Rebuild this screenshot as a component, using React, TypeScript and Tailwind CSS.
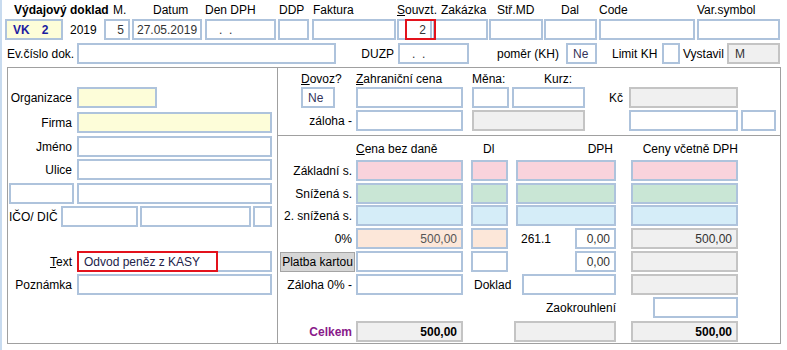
import React from "react";

type Kind = "w" | "y" | "g" | "p" | "gr" | "b" | "o";
const KIND: Record<Kind, string> = {
  w: "border-[#aec3dc] bg-white",
  y: "border-[#aec3dc] bg-[#fdfdd9]",
  g: "border-[#c4c4c4] bg-[#f0f0f0]",
  p: "border-[#aec3dc] bg-[#f9d3dc]",
  gr: "border-[#aec3dc] bg-[#c9e6d5]",
  b: "border-[#aec3dc] bg-[#d5edf8]",
  o: "border-[#aec3dc] bg-[#fce7d9]",
};

function F({
  k = "w",
  className = "",
  right = false,
  children,
}: {
  k?: Kind;
  className?: string;
  right?: boolean;
  children?: React.ReactNode;
}) {
  return (
    <div
      className={`h-[21px] shrink-0 border-2 flex items-center whitespace-nowrap overflow-hidden text-[#333] ${
        right ? "justify-end pr-[4px]" : "pl-[3px]"
      } ${KIND[k]} ${className}`}
    >
      {children}
    </div>
  );
}

function Lbl({ className = "", children }: { className?: string; children?: React.ReactNode }) {
  return <div className={`shrink-0 whitespace-nowrap ${className}`}>{children}</div>;
}

function PriceRow({
  label,
  k,
  className = "",
}: {
  label: string;
  k: Kind;
  className?: string;
}) {
  return (
    <div className={`flex items-center h-[21px] ${className}`}>
      <Lbl className="w-[76px] text-right pr-[2px]">{label}</Lbl>
      <F k={k} className="ml-[2px] w-[107px]" />
      <F k={k} className="ml-[8px] w-[37px]" />
      <F k={k} className="ml-[8px] w-[100px]" />
      <F k={k} className="ml-[15px] w-[107px]" />
    </div>
  );
}

export default function App() {
  return (
    <div className="w-[787px] h-[350px] bg-white overflow-hidden border-l-2 border-[#c8dbef] font-['Liberation_Sans',Arial,sans-serif] text-[12px] text-black leading-[14px]">
      {/* header labels */}
      <div className="flex h-[19px] pt-[3px]">
        <Lbl className="ml-[12px] w-[99px] font-bold">Výdajový doklad</Lbl>
        <Lbl className="w-[40px]">M.</Lbl>
        <Lbl className="w-[52px]">Datum</Lbl>
        <Lbl className="w-[74px]">Den DPH</Lbl>
        <Lbl className="w-[34px]">DDP</Lbl>
        <Lbl className="w-[84px]">Faktura</Lbl>
        <Lbl className="w-[44px]">
          <span className="underline">S</span>ouvzt.
        </Lbl>
        <Lbl className="w-[56px]">Zakázka</Lbl>
        <Lbl className="w-[64px]">Stř.MD</Lbl>
        <Lbl className="w-[38px]">Dal</Lbl>
        <Lbl className="w-[98px]">Code</Lbl>
        <Lbl>Var.symbol</Lbl>
      </div>

      {/* row 1 */}
      <div className="flex items-center h-[21px]">
        <F k="y" className="ml-[3px] w-[58px] font-bold text-[#1c1ca0]">
          <span className="pl-[3px] text-[#1c1ca0]">VK</span>
          <span className="ml-[12px] text-[#1c1ca0]">2</span>
        </F>
        <Lbl className="w-[41px] pl-[7px]">2019</Lbl>
        <F className="w-[26px]" right>
          5
        </F>
        <F className="ml-[2px] w-[70px]">27.05.2019</F>
        <F className="ml-[3px] w-[71px]">
          <span className="pl-[9px] whitespace-pre">.  .</span>
        </F>
        <F className="ml-[2px] w-[31px]" />
        <F className="ml-[3px] w-[84px]" />
        <div className="relative ml-[1px] w-[35px] h-[21px] shrink-0 z-10">
          <F className="w-[35px]" right>
            2
          </F>
          <div className="absolute left-[8px] top-0 w-[31px] h-[21px] border-2 border-[#e3121c]" />
        </div>
        <F className="ml-[1px] w-[55px]" />
        <F className="ml-[1px] w-[54px]" />
        <F className="ml-[1px] w-[53px]" />
        <F className="ml-[2px] w-[96px]" />
        <F className="ml-[2px] w-[83px]" />
      </div>

      {/* row 2 */}
      <div className="flex items-center h-[21px] mt-[3px]">
        <Lbl className="w-[75px] pl-[5px]">Ev.číslo dok.</Lbl>
        <F className="w-[259px]" />
        <Lbl className="w-[62px] text-right pr-[4px]">DUZP</Lbl>
        <F className="w-[71px]">
          <span className="pl-[9px] whitespace-pre">.  .</span>
        </F>
        <Lbl className="w-[97px] pl-[28px]">poměr (KH)</Lbl>
        <F className="w-[31px] text-[#33335a]">
          <span className="pl-[2px]">Ne</span>
        </F>
        <Lbl className="w-[65px] pl-[15px]">Limit KH</Lbl>
        <F className="w-[18px]" />
        <Lbl className="w-[47px] pl-[3px]">Vystavil</Lbl>
        <F k="g" className="w-[53px]">
          <span className="pl-[3px]">M</span>
        </F>
      </div>

      {/* main panel */}
      <div className="ml-[5px] mt-[3px] w-[774px] h-[277px] border border-[#a0a0a0] flex">
        {/* left column */}
        <div className="w-[270px] shrink-0 border-r border-[#a0a0a0] pt-[19px]">
          <div className="flex items-center h-[21px]">
            <Lbl className="w-[66px] text-right pr-[2px]">Organizace</Lbl>
            <F k="y" className="ml-[3px] w-[80px]" />
          </div>
          <div className="flex items-center h-[21px] mt-[4px]">
            <Lbl className="w-[66px] text-right pr-[2px]">Firma</Lbl>
            <F k="y" className="ml-[3px] w-[195px]" />
          </div>
          <div className="flex items-center h-[21px] mt-[3px]">
            <Lbl className="w-[66px] text-right pr-[2px]">Jméno</Lbl>
            <F className="ml-[3px] w-[195px]" />
          </div>
          <div className="flex items-center h-[21px] mt-[2px]">
            <Lbl className="w-[66px] text-right pr-[2px]">Ulice</Lbl>
            <F className="ml-[3px] w-[195px]" />
          </div>
          <div className="flex items-center h-[21px] mt-[3px]">
            <F className="ml-[1px] w-[65px]" />
            <F className="ml-[3px] w-[195px]" />
          </div>
          <div className="flex items-center h-[21px] mt-[2px]">
            <Lbl className="w-[52px] pl-[1px]">IČO/ DIČ</Lbl>
            <F className="ml-[1px] w-[77px]" />
            <F className="ml-[2px] w-[111px]" />
            <F className="ml-[2px] w-[19px]" />
          </div>
          <div className="flex items-center h-[21px] mt-[24px]">
            <Lbl className="w-[66px] text-right pr-[2px]">
              <span className="underline">T</span>ext
            </Lbl>
            <div className="relative ml-[3px] w-[195px] h-[21px] shrink-0">
              <F className="w-[195px] text-[#22224a]">
                <span className="pl-[2px] text-[#22224a]">Odvod peněz z KASY</span>
              </F>
              <div className="absolute left-0 top-0 w-[141px] h-[21px] border-2 border-[#e3121c]" />
            </div>
          </div>
          <div className="flex items-center h-[21px] mt-[2px]">
            <Lbl className="w-[66px] text-right pr-[2px]">Poznámka</Lbl>
            <F className="ml-[3px] w-[195px]" />
          </div>
        </div>

        {/* right column */}
        <div className="flex-1 flex flex-col">
          {/* import section */}
          <div className="h-[68px] shrink-0 border-b border-[#a0a0a0] pt-[4px]">
            <div className="flex h-[14px]">
              <Lbl className="w-[78px] pl-[23px]">
                <span className="underline">D</span>ovoz?
              </Lbl>
              <Lbl className="w-[116px]">
                <span className="underline">Z</span>ahraniční cena
              </Lbl>
              <Lbl className="w-[72px]">Měna:</Lbl>
              <Lbl>Kurz:</Lbl>
            </div>
            <div className="flex items-center h-[21px] mt-[1px]">
              <F className="ml-[23px] w-[34px] text-[#33335a]">
                <span className="pl-[2px]">Ne</span>
              </F>
              <F className="ml-[21px] w-[107px]" />
              <F className="ml-[9px] w-[37px]" />
              <F className="ml-[3px] w-[73px]" />
              <Lbl className="w-[44px] text-right pr-[6px]">Kč</Lbl>
              <F k="g" className="w-[109px]" />
            </div>
            <div className="flex items-center h-[21px] mt-[2px]">
              <Lbl className="w-[76px] text-right pr-[2px]">záloha -</Lbl>
              <F className="ml-[2px] w-[107px]" />
              <F k="g" className="ml-[9px] w-[113px]" />
              <F className="ml-[44px] w-[109px]" />
              <F className="ml-[3px] w-[35px]" />
            </div>
          </div>

          {/* price section */}
          <div className="flex-1 pt-[6px]">
            <div className="flex h-[14px]">
              <Lbl className="ml-[78px] w-[107px]">
                <span className="underline">C</span>ena bez daně
              </Lbl>
              <Lbl className="ml-[8px] w-[37px] pl-[12px]">Dl</Lbl>
              <Lbl className="ml-[8px] w-[100px] text-right pr-[3px]">DPH</Lbl>
              <Lbl className="ml-[15px] w-[107px] text-right">Ceny včetně DPH</Lbl>
            </div>

            <PriceRow label="Základní s." k="p" className="mt-[4px]" />
            <PriceRow label="Snížená s." k="gr" className="mt-[2px]" />
            <PriceRow label="2. snížená s." k="b" className="mt-[1px]" />

            {/* 0% */}
            <div className="flex items-center h-[21px] mt-[2px]">
              <Lbl className="w-[76px] text-right pr-[2px]">0%</Lbl>
              <F k="o" className="ml-[2px] w-[107px] text-[#555]" right>
                500,00
              </F>
              <F k="o" className="ml-[8px] w-[37px]" />
              <div className="ml-[8px] w-[100px] shrink-0 flex items-center">
                <Lbl className="w-[59px] pl-[5px]">261.1</Lbl>
                <F className="w-[41px]" right>
                  0,00
                </F>
              </div>
              <F k="g" className="ml-[15px] w-[107px]" right>
                500,00
              </F>
            </div>

            {/* platba kartou */}
            <div className="flex items-center h-[21px] mt-[2px]">
              <div className="ml-[2px] w-[75px] h-[20px] shrink-0 bg-[#d6d6d6] border border-[#a4a4a4] flex items-center justify-center whitespace-nowrap overflow-hidden">
                Platba kartou
              </div>
              <F className="ml-[1px] w-[107px]" />
              <F className="ml-[8px] w-[37px]" />
              <div className="ml-[8px] w-[100px] shrink-0 flex items-center">
                <F className="ml-[59px] w-[41px]" right>
                  0,00
                </F>
              </div>
              <F k="g" className="ml-[15px] w-[107px]" />
            </div>

            {/* záloha 0% */}
            <div className="flex items-center h-[21px] mt-[2px]">
              <Lbl className="w-[76px] text-right pr-[2px]">Záloha 0% -</Lbl>
              <F className="ml-[2px] w-[107px]" />
              <Lbl className="w-[59px] pl-[11px]">Doklad</Lbl>
              <F className="w-[94px]" />
              <F k="g" className="ml-[15px] w-[107px]" />
            </div>

            {/* zaokrouhlení */}
            <div className="flex items-center h-[21px] mt-[2px]">
              <Lbl className="w-[338px] text-right">Zaokrouhlení</Lbl>
              <F className="ml-[37px] w-[85px]" />
            </div>

            {/* celkem */}
            <div className="flex items-center h-[21px] mt-[3px]">
              <Lbl className="w-[76px] text-right pr-[2px] font-bold text-[#8a1a8a]">Celkem</Lbl>
              <F k="g" className="ml-[2px] w-[107px] font-bold text-black" right>
                <span className="text-black">500,00</span>
              </F>
              <F k="g" className="ml-[51px] w-[102px]" />
              <F k="g" className="ml-[15px] w-[107px] font-bold" right>
                <span className="text-black">500,00</span>
              </F>
            </div>
          </div>
        </div>
      </div>
    </div>
  );
}
